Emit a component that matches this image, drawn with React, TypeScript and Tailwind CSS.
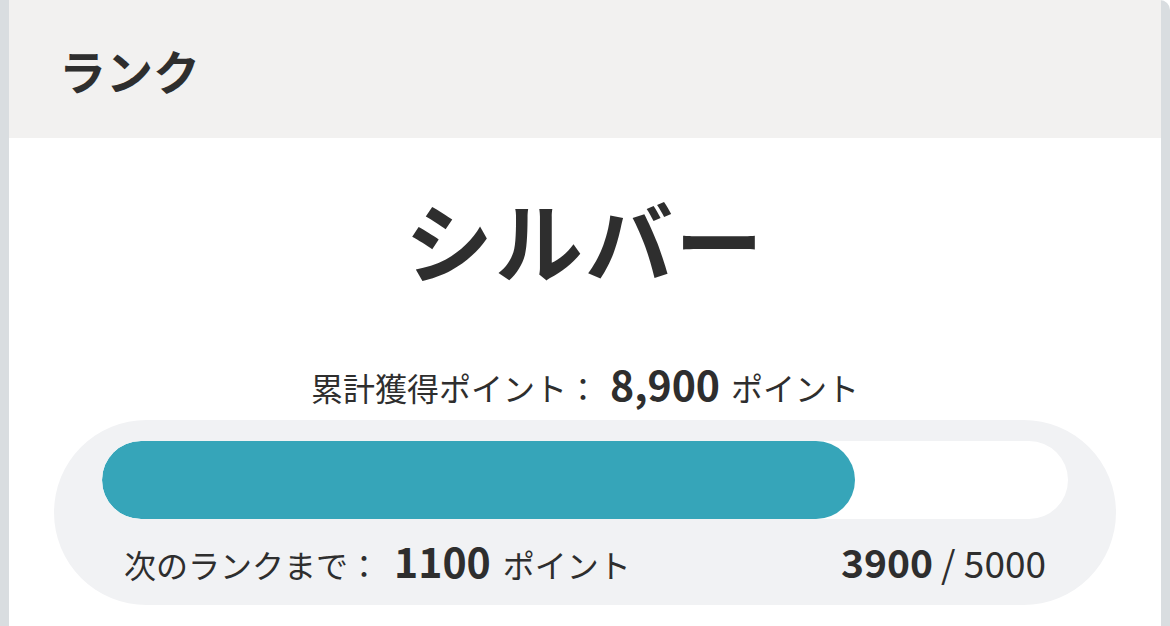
const jp = { fontFamily: '"Noto Sans CJK JP", "Noto Sans", sans-serif' };

const total = 5000;
const current = 3900;

export default function App() {
  const pct = (current / total) * 100;

  return (
    <div className="h-[626px] w-[1170px] overflow-hidden bg-white" style={jp}>
      <div className="h-[640px] rounded-tr-[10px] border-x-[9px] border-[#d9dde0] bg-white text-[#2e2e2e]">
        <header className="flex h-[138px] items-center bg-[#f2f1f0] px-[50px]">
          <h2 className="text-[47px] font-bold leading-none">ランク</h2>
        </header>

        <section className="flex flex-col items-center px-[45px] pt-[56px]">
          <h1 className="text-[88px] font-bold leading-none tracking-[2px]">シルバー</h1>

          <p className="mt-[81px] flex items-baseline text-[32px] leading-none">
            累計獲得ポイント：
            <span className="mx-[11px] text-[41px] font-bold">8,900</span>
            ポイント
          </p>

          <div className="mt-[16px] w-full rounded-full bg-[#f1f2f4] px-[48px] pb-[24px] pt-[21px]">
            <div className="h-[78px] w-full overflow-hidden rounded-full bg-white">
              <div className="h-full rounded-full bg-[#36a5b9]" style={{ width: `${pct}%` }} />
            </div>
            <div className="mt-[21px] flex items-baseline justify-between px-[22px] text-[32px] leading-none">
              <span className="flex items-baseline">
                次のランクまで：
                <span className="ml-[14px] mr-[12px] text-[41px] font-bold">1100</span>
                ポイント
              </span>
              <span>
                <span className="text-[39px] font-bold">3900</span>
                <span className="ml-2 text-[37px]">/ 5000</span>
              </span>
            </div>
          </div>
        </section>
      </div>
    </div>
  );
}
